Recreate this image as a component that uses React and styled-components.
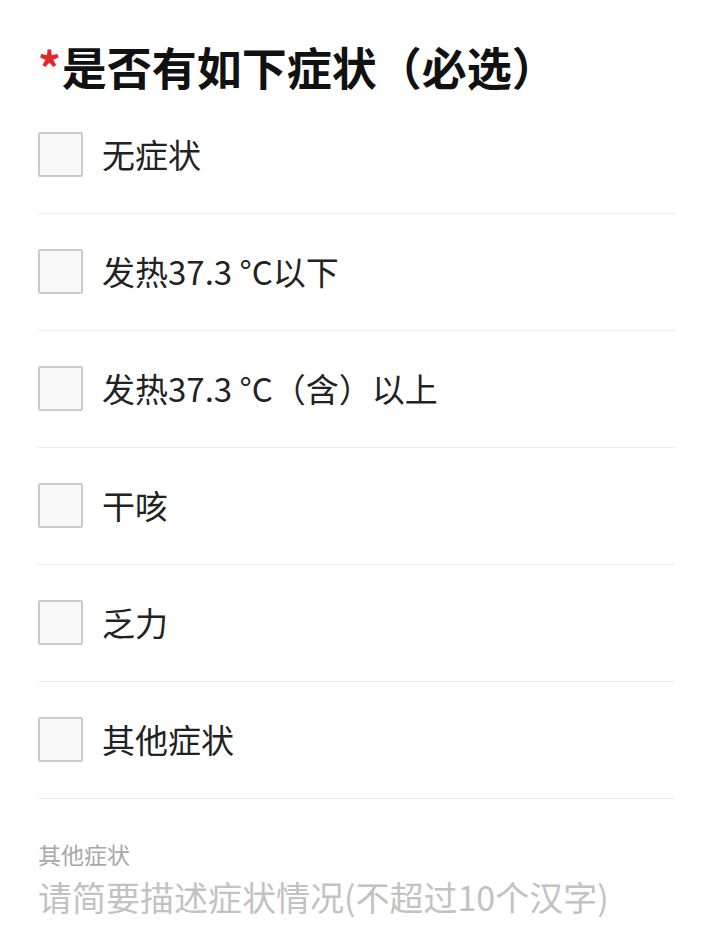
import React, { useState } from "react";
import styled, { createGlobalStyle } from "styled-components";

const GlobalStyle = createGlobalStyle`
  html, body {
    margin: 0;
    padding: 0;
    background: #ffffff;
  }
  body {
    font-family: "Noto Sans CJK SC", "Noto Sans", sans-serif;
  }
`;

const options = [
  "无症状",
  "发热37.3 °C以下",
  "发热37.3 °C（含）以上",
  "干咳",
  "乏力",
  "其他症状",
];

const App = () => {
  const [checked, setChecked] = useState({});

  const toggle = (i) => setChecked((c) => ({ ...c, [i]: !c[i] }));

  return (
    <>
      <GlobalStyle />
      <Page>
        <Title>
          <Required>*</Required>是否有如下症状（必选）
        </Title>

        <OptionList>
          {options.map((label, i) => (
            <OptionRow key={label} onClick={() => toggle(i)}>
              <Checkbox $checked={!!checked[i]} />
              <OptionLabel>{label}</OptionLabel>
            </OptionRow>
          ))}
        </OptionList>

        <OtherField>
          <FieldLabel>其他症状</FieldLabel>
          <FieldInput placeholder="请简要描述症状情况(不超过10个汉字)" />
        </OtherField>
      </Page>
    </>
  );
};

export default App;

const Page = styled.div`
  width: 709px;
  min-height: 939px;
  box-sizing: border-box;
  padding: 36px 34px 0 38px;
  background: #fff;
`;

const Title = styled.h1`
  margin: 0;
  font-size: 45px;
  line-height: 61px;
  font-weight: 700;
  color: #111;
  letter-spacing: 0;
  white-space: nowrap;
`;

const Required = styled.span`
  color: #e5262b;
  font-weight: 700;
  margin-right: 1px;
`;

const OptionList = styled.div`
  display: flex;
  flex-direction: column;
`;

const OptionRow = styled.label`
  display: flex;
  align-items: center;
  padding: 35px 0 36px;
  border-bottom: 1px solid #ececec;
  cursor: pointer;
`;

const Checkbox = styled.span`
  flex: none;
  width: 45px;
  height: 45px;
  box-sizing: border-box;
  border: 2px solid #cacaca;
  border-radius: 2px;
  background: ${(p) => (p.$checked ? "#e5262b" : "#f8f8f8")};
`;

const OptionLabel = styled.span`
  margin-left: 19px;
  font-size: 33px;
  line-height: 45px;
  color: #222;
`;

const OtherField = styled.div`
  display: flex;
  flex-direction: column;
  padding-top: 38px;
`;

const FieldLabel = styled.div`
  font-size: 23px;
  line-height: 34px;
  color: #a8a8a8;
`;

const FieldInput = styled.input`
  margin-top: 4px;
  padding: 0;
  border: none;
  outline: none;
  background: transparent;
  font-family: "Noto Sans CJK SC", "Noto Sans", sans-serif;
  font-size: 34px;
  line-height: 44px;
  height: 44px;
  color: #222;

  &::placeholder {
    color: #c2c2c2;
  }
`;
